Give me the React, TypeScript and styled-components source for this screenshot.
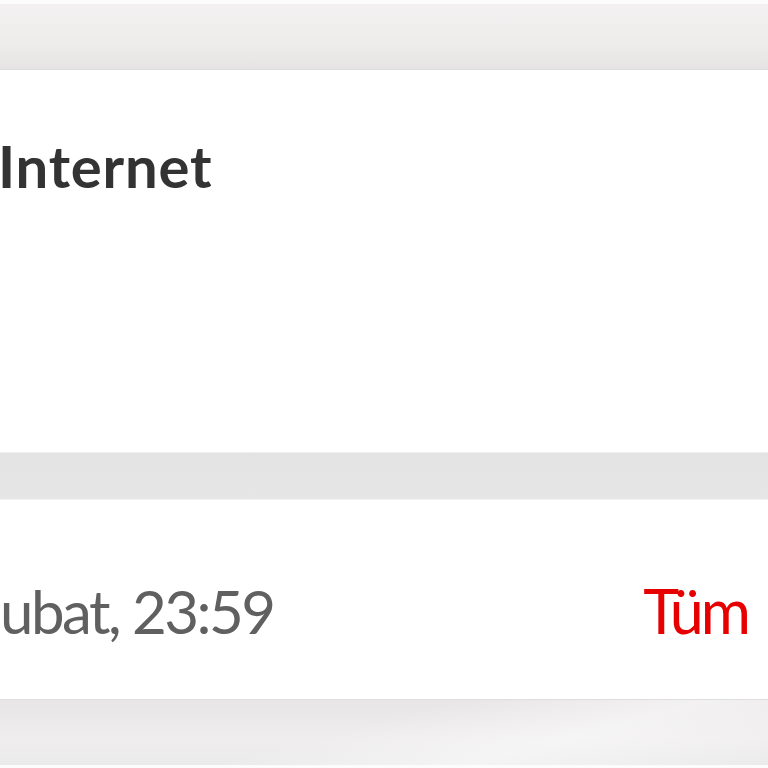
import { FC } from "react";
import styled, { createGlobalStyle } from "styled-components";

const GlobalStyle = createGlobalStyle`
  html, body {
    margin: 0;
    padding: 0;
    background: #ffffff;
    font-family: Lato, "Open Sans", sans-serif;
    overflow: hidden;
  }
`;

const Page = styled.div`
  width: 768px;
  height: 768px;
  display: flex;
  flex-direction: column;
  overflow: hidden;
  background: #ffffff;
`;

const Edge = styled.div<{ $h: number }>`
  height: ${(p) => p.$h}px;
  flex-shrink: 0;
  background: #fdfcfc;
`;

const TopBand = styled.div`
  height: 65px;
  flex-shrink: 0;
  background: linear-gradient(180deg, #f3f0f1 0%, #efecec 60%, #e5e3e3 100%);
  border-bottom: 1px solid #dcdcdc;
`;

const Divider = styled.div`
  height: 46px;
  flex-shrink: 0;
  background: linear-gradient(180deg, #e3e3e3 0%, #e6e6e6 100%);
  border-top: 1px solid #efefef;
  border-bottom: 1px solid #f3f3f3;
`;

const BottomBand = styled.div`
  height: 65px;
  flex-shrink: 0;
  border-top: 1px solid #dedede;
  background:
    linear-gradient(165deg, rgba(255, 255, 255, 0) 45%, rgba(255, 255, 255, 0.45) 70%, rgba(255, 255, 255, 0) 100%),
    linear-gradient(180deg, #e8e5e6 0%, #efedee 60%, #ecebeb 100%);
`;

const Card = styled.div<{ $h: number }>`
  height: ${(p) => p.$h}px;
  flex-shrink: 0;
  background: #ffffff;
  overflow: hidden;
`;

const Title = styled.h2`
  margin: 0;
  padding-top: 67px;
  margin-left: -2px;
  font-size: 58px;
  line-height: 1;
  font-weight: 700;
  color: #333333;
  letter-spacing: 0.8px;
  white-space: nowrap;
`;

const Row = styled.div`
  display: flex;
  justify-content: space-between;
  align-items: baseline;
  padding-top: 80px;
  white-space: nowrap;
`;

const DateText = styled.span`
  font-size: 60px;
  line-height: 1;
  color: #606060;
  letter-spacing: -2.5px;
`;

const Link = styled.span`
  font-size: 61px;
  line-height: 1;
  color: #e60000;
  letter-spacing: -3px;
  margin-right: 20px;
`;

const App: FC = () => {
  return (
    <Page>
      <GlobalStyle />
      <Edge $h={4} />
      <TopBand />
      <Card $h={382}>
        <Title>Internet</Title>
      </Card>
      <Divider />
      <Card $h={199}>
        <Row>
          <DateText>ubat, 23:59</DateText>
          <Link>Tüm</Link>
        </Row>
      </Card>
      <BottomBand />
      <Edge $h={3} />
    </Page>
  );
};

export default App;
